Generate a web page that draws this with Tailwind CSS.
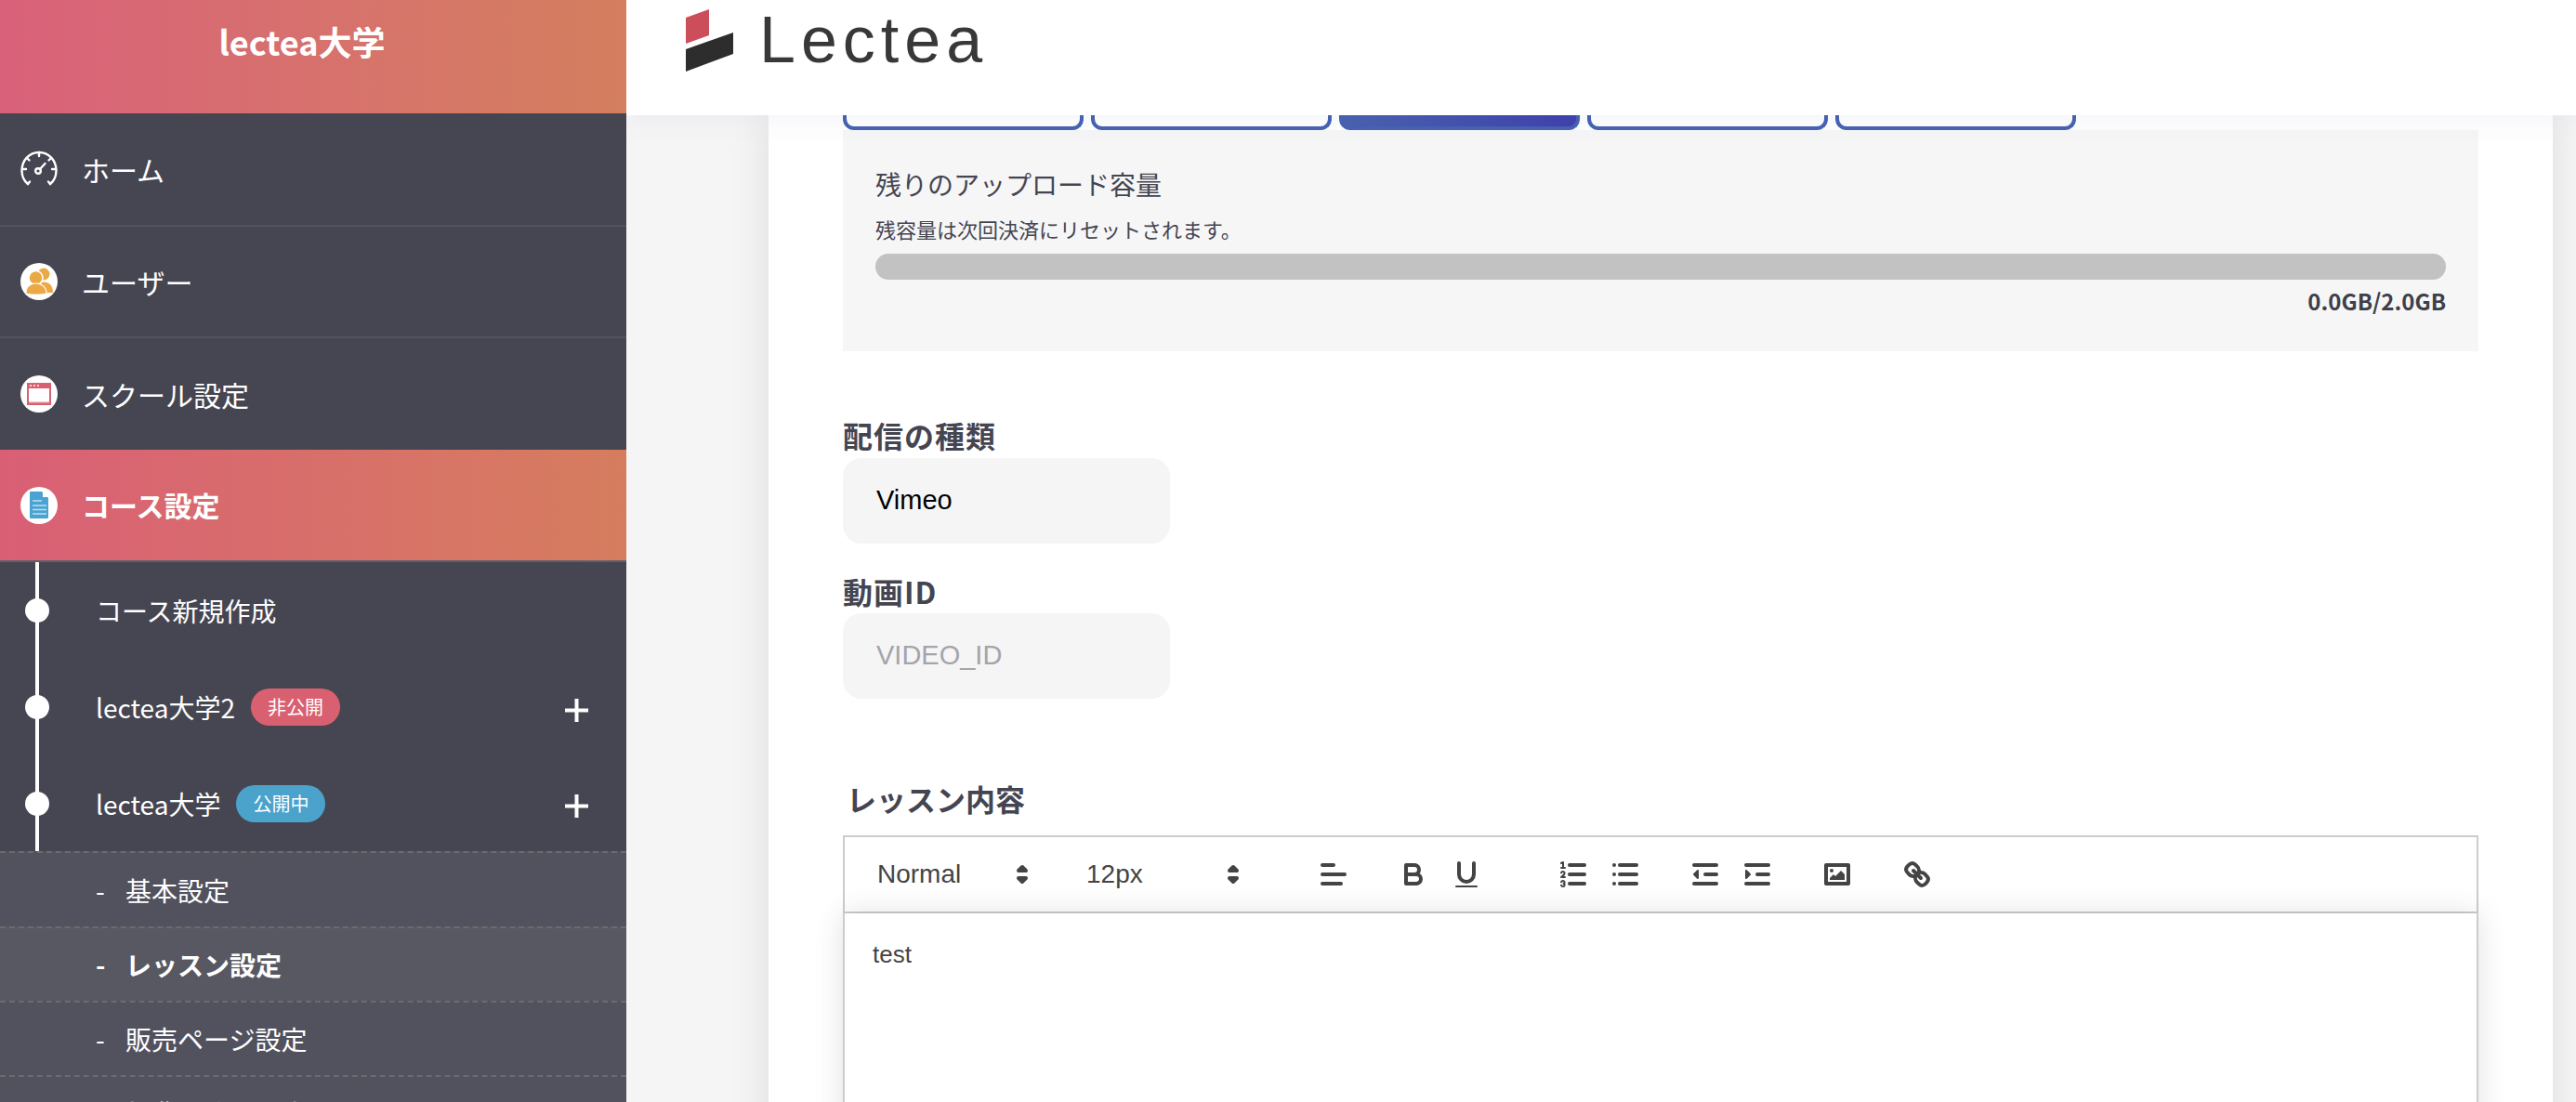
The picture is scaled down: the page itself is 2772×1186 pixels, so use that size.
<!DOCTYPE html>
<html lang="ja">
<head>
  <meta charset="UTF-8" />
  <meta name="viewport" content="width=device-width, initial-scale=1.0" />
  <title>レッスン設定 | Lectea</title>
  <script src="https://cdn.jsdelivr.net/npm/@tailwindcss/browser@4"></script>
</head>
<body class="h-screen overflow-hidden flex bg-[#f5f5f5] font-['Noto_Sans_CJK_JP','Noto_Sans',sans-serif]">

  <!-- Sidebar -->
  <aside class="w-[674px] shrink-0 h-full overflow-hidden bg-[#464652] text-white">
    <div class="h-[122px] pt-[18px] pr-[24px] text-center text-[36px] leading-[52px] font-bold bg-linear-to-r from-[#d9617a] to-[#d47f5e]">lectea大学</div>

    <nav>
      <a class="h-[122px] flex items-center pl-[22px] gap-[26px] border-b-2 border-[#53535f] text-[30px]">
        <svg class="w-10 h-10" viewBox="0 0 40 40" fill="none" stroke="white" stroke-width="2.4" stroke-linecap="round">
          <path d="M8 36C3.5 32.500 1.500 27 1.500 21.500 1.500 10.500 9.500 2 20 2s18.500 8.500 18.500 19.500C38.500 27 36.500 32.500 32 36" />
          <path d="M8 36l2-2.500M32 36l-2-2.500M20 2v4M7 8l2.500 2.500M33 8l-2.500 2.500M2 20h4M34 20h4" />
          <circle cx="19" cy="22" r="2.800" />
          <path d="M21 20l5.500-6" />
        </svg>
        ホーム
      </a>
      <a class="h-[120px] flex items-center pl-[22px] gap-[26px] border-b-2 border-[#53535f] text-[30px]">
        <span class="w-10 h-10 rounded-full bg-white flex items-center justify-center">
          <svg class="w-10 h-10" viewBox="0 0 40 40">
            <circle cx="25" cy="12" r="6.500" fill="#eba945" />
            <path d="M22 21c6-2 13 1 13 11h-10z" fill="#eba945" />
            <circle cx="16.500" cy="16" r="7.500" fill="#eba945" stroke="white" stroke-width="1.500" />
            <path d="M6 33c-.5-7 4-11 10.500-11S28 26 28 33c-7 1.500-15 1.500-22 0z" fill="#eba945" stroke="white" stroke-width="1.200" />
          </svg>
        </span>
        ユーザー
      </a>
      <a class="h-[120px] flex items-center pl-[22px] gap-[26px] text-[30px]">
        <span class="w-10 h-10 rounded-full bg-white flex items-center justify-center">
          <svg class="w-10 h-10" viewBox="0 0 40 40">
            <rect x="7" y="8" width="26" height="24" fill="#d96070" />
            <rect x="9" y="14" width="22" height="15" fill="white" />
            <rect x="9" y="28" width="22" height="1.500" fill="#f0c4ca" />
            <circle cx="11" cy="11" r="1" fill="white" />
            <circle cx="15" cy="11" r="1" fill="white" />
            <circle cx="19" cy="11" r="1" fill="white" />
          </svg>
        </span>
        スクール設定
      </a>
      <a class="h-[121px] flex items-center pl-[22px] gap-[26px] border-b-2 border-[#5f5f6b] text-[30px] font-bold bg-linear-to-r from-[#d95f75] to-[#d67d5e]">
        <span class="w-10 h-10 rounded-full bg-white flex items-center justify-center">
          <svg class="w-10 h-10" viewBox="0 0 40 40">
            <path d="M11 5h12l7 7v21a1 1 0 0 1-1 1H11a1 1 0 0 1-1-1V6a1 1 0 0 1 1-1z" fill="#4ba3d3" />
            <path d="M24 5l6 6h-6z" fill="white" />
            <path d="M13 15h10M13 20h15M13 24.500h15M13 29h15" stroke="#bfe0f0" stroke-width="1.600" />
          </svg>
        </span>
        コース設定
      </a>

      <!-- Course tree -->
      <div class="relative h-[311px] text-[28px]">
        <span class="absolute left-[38px] top-0 bottom-0 w-1 bg-white"></span>
        <div class="h-[104px] flex items-center">
          <span class="relative w-[26px] h-[26px] ml-[27px] mr-[50px] rounded-full bg-white"></span>
          コース新規作成
        </div>
        <div class="h-[104px] flex items-center">
          <span class="relative w-[26px] h-[26px] ml-[27px] mr-[50px] rounded-full bg-white"></span>
          lectea大学2
          <span class="ml-[17px] w-[96px] h-10 rounded-full bg-[#d96070] text-[20px] flex items-center justify-center">非公開</span>
          <svg class="ml-auto mr-[41px] mt-[6px] w-[25px] h-[25px]" viewBox="0 0 25 25" fill="white"><path d="M10.500 0h4v25h-4z" /><path d="M0 10.500h25v4H0z" /></svg>
        </div>
        <div class="h-[103px] flex items-center">
          <span class="relative w-[26px] h-[26px] ml-[27px] mr-[50px] rounded-full bg-white"></span>
          lectea大学
          <span class="ml-[17px] w-[96px] h-10 rounded-full bg-[#4ba3cc] text-[20px] flex items-center justify-center">公開中</span>
          <svg class="ml-auto mr-[41px] mt-[6px] w-[25px] h-[25px]" viewBox="0 0 25 25" fill="white"><path d="M10.500 0h4v25h-4z" /><path d="M0 10.500h25v4H0z" /></svg>
        </div>
      </div>

      <!-- Course sub menu -->
      <div class="bg-[#52525f] text-[28px]">
        <a class="h-[81px] flex items-center pl-[103px] border-t-2 border-dashed border-[#6a6b6b]"><span class="w-[32px]">-</span>基本設定</a>
        <a class="h-[80px] flex items-center pl-[103px] border-t-2 border-dashed border-[#6a6b6b] bg-[#585862] font-bold"><span class="w-[32px]">-</span>レッスン設定</a>
        <a class="h-[80px] flex items-center pl-[103px] border-t-2 border-dashed border-[#6a6b6b]"><span class="w-[32px]">-</span>販売ページ設定</a>
        <a class="h-[80px] flex items-center pl-[103px] border-t-2 border-dashed border-[#6a6b6b]"><span class="w-[32px]">-</span>特典・修了設定</a>
      </div>
    </nav>
  </aside>

  <!-- Main -->
  <div class="flex-1 min-w-0 flex flex-col h-full overflow-hidden">
    <header class="relative z-10 h-[124px] shrink-0 bg-white flex items-start pl-[64px] shadow-[0_4px_30px_rgba(70,90,170,0.07)]">
      <svg class="mt-[10px] w-[51px] h-[67px]" viewBox="0 0 51 67">
        <path d="M0 9L25 0v28L0 37z" fill="#cd4e5b" />
        <path d="M0 43l51-18v23L0 67z" fill="#2d2d2d" />
      </svg>
      <span class="ml-[28px] mt-[1px] text-[70px] leading-[84px] tracking-[6px] text-[#383838] font-['Liberation_Sans',sans-serif]">Lectea</span>
    </header>

    <div class="pl-[153px] pr-[25px]">
      <main class="h-[1300px] bg-white px-[80px] shadow-[0_0_40px_rgba(0,0,0,0.1)] text-[#454552]">

        <!-- Tabs, scrolled under the header -->
        <div class="flex gap-2 h-4">
          <div class="w-[259px] rounded-b-[12px] border-x-4 border-b-4 border-[#4662b0]"></div>
          <div class="w-[259px] rounded-b-[12px] border-x-4 border-b-4 border-[#4662b0]"></div>
          <div class="w-[259px] rounded-b-[12px] border-x-4 border-b-4 border-[#4662b0] bg-linear-to-r from-[#4a62ae] to-[#4040ac]"></div>
          <div class="w-[259px] rounded-b-[12px] border-x-4 border-b-4 border-[#4662b0]"></div>
          <div class="w-[259px] rounded-b-[12px] border-x-4 border-b-4 border-[#4662b0]"></div>
        </div>

        <!-- Upload quota -->
        <section class="h-[238px] bg-[#f6f6f6] px-[35px] pt-[38px]">
          <p class="text-[28px] leading-[40px]">残りのアップロード容量</p>
          <p class="mt-3 text-[22px] leading-[32px]">残容量は次回決済にリセットされます。</p>
          <div class="mt-[11px] h-7 rounded-full bg-[#c2c2c2]"></div>
          <p class="mt-[7px] text-right text-[24px] leading-[32px] font-bold text-[#3f3f4c]">0.0GB/2.0GB</p>
        </section>

        <!-- Video -->
        <label class="block mt-[68px] text-[32px] leading-[44px] font-bold tracking-[1px]">配信の種類</label>
        <div class="mt-[3px] w-[352px] h-[92px] rounded-[20px] bg-[#f5f5f5] pl-9 flex items-center text-[29px] text-black font-['Liberation_Sans',sans-serif]">Vimeo</div>
        <label class="block mt-[29px] text-[32px] leading-[44px] font-bold tracking-[1px]">動画ID</label>
        <div class="mt-[2px] w-[352px] h-[92px] rounded-[20px] bg-[#f5f5f5] pl-9 flex items-center text-[29px] text-[#a4a4ab] font-['Liberation_Sans',sans-serif]">VIDEO_ID</div>

        <!-- Lesson body -->
        <label class="block mt-[85px] pl-1 text-[32px] leading-[44px] font-bold">レッスン内容</label>
        <div class="mt-[18px] font-['Liberation_Sans',sans-serif] text-[#444]">
          <div class="h-[84px] border-2 border-[#ccc] flex items-center pl-[35px] text-[28px]">
            <span class="w-[174px] flex items-center justify-between">Normal
              <svg class="w-9 h-9" viewBox="0 0 18 18" fill="none" stroke="#444" stroke-width="2" stroke-linejoin="round"><polygon points="7 11 9 13 11 11 7 11" /><polygon points="7 7 9 5 11 7 7 7" /></svg>
            </span>
            <span class="ml-[51px] w-[176px] flex items-center justify-between">12px
              <svg class="w-9 h-9" viewBox="0 0 18 18" fill="none" stroke="#444" stroke-width="2" stroke-linejoin="round"><polygon points="7 11 9 13 11 11 7 11" /><polygon points="7 7 9 5 11 7 7 7" /></svg>
            </span>
            <!-- align -->
            <svg class="ml-[72px] w-9 h-9" viewBox="0 0 18 18" fill="none" stroke="#444" stroke-width="2" stroke-linecap="round"><path d="M3 9h12M3 14h10M3 4h6" /></svg>
            <!-- bold -->
            <svg class="ml-[50px] w-9 h-9" viewBox="0 0 18 18" fill="none" stroke="#444" stroke-width="2" stroke-linejoin="round"><path d="M5,4H9.500A2.500,2.500,0,0,1,12,6.500v0A2.500,2.500,0,0,1,9.500,9H5V4Z" /><path d="M5,9h5.500A2.500,2.500,0,0,1,13,11.500v0A2.500,2.500,0,0,1,10.500,14H5V9Z" /></svg>
            <!-- underline -->
            <svg class="ml-[21px] w-9 h-9" viewBox="0 0 18 18" fill="none" stroke="#444" stroke-width="2" stroke-linecap="round"><path d="M5,3V9a4,4,0,0,0,4,4H9a4,4,0,0,0,4-4V3" /><rect x="3" y="15" width="12" height="1" rx="0.500" fill="#444" stroke="none" /></svg>
            <!-- ordered list -->
            <svg class="ml-[79px] w-9 h-9" viewBox="0 0 18 18" fill="none" stroke="#444" stroke-width="2" stroke-linecap="round" stroke-linejoin="round">
              <path d="M7 4h8M7 9h8M7 14h8" />
              <path d="M2.500 5.500h2M3.500 5.500v-3l-1 .5" stroke-width="1" />
              <path d="M4.500 10.500h-2c0-.234 1.850-1.076 1.850-2.234A.959.959 0 0 0 2.500 8.156" stroke-width="1" />
              <path d="M2.500 14.846a.959.959 0 0 0 1.850-.109A.7.7 0 0 0 3.750 14a.688.688 0 0 0 .6-.736.959.959 0 0 0-1.850-.109" stroke-width="1" />
            </svg>
            <!-- bullet list -->
            <svg class="ml-[20px] w-9 h-9" viewBox="0 0 18 18" fill="none" stroke="#444" stroke-width="2" stroke-linecap="round"><path d="M6 4h9M6 9h9M6 14h9M3 4h0M3 9h0M3 14h0" /></svg>
            <!-- outdent -->
            <svg class="ml-[50px] w-9 h-9" viewBox="0 0 18 18" fill="none" stroke="#444" stroke-width="2" stroke-linecap="round" stroke-linejoin="round"><path d="M3 14h12M3 4h12M9 9h6" /><polygon points="5 7 5 11 3 9 5 7" fill="#444" stroke-width="1" /></svg>
            <!-- indent -->
            <svg class="ml-[20px] w-9 h-9" viewBox="0 0 18 18" fill="none" stroke="#444" stroke-width="2" stroke-linecap="round" stroke-linejoin="round"><path d="M3 14h12M3 4h12M9 9h6" /><polygon points="3 7 3 11 5 9 3 7" fill="#444" stroke-width="1" /></svg>
            <!-- image -->
            <svg class="ml-[50px] w-9 h-9" viewBox="0 0 18 18" fill="none" stroke="#444" stroke-width="2" stroke-linejoin="round"><rect x="3" y="4" width="12" height="10" /><circle cx="6" cy="7" r="1" fill="#444" stroke="none" /><polygon points="5 12 5 11 7 9 8 10 11 7 13 9 13 12 5 12" fill="#444" stroke="none" /></svg>
            <!-- link -->
            <svg class="ml-[50px] w-9 h-9" viewBox="0 0 18 18" fill="none" stroke="#444" stroke-width="2" stroke-linecap="round"><path d="M7 7l4 4" /><path d="M8.900,4.577a3.476,3.476,0,0,1,.36,4.679A3.476,3.476,0,0,1,4.577,8.900C3.185,7.500,2.035,6.400,4.217,4.217S7.500,3.185,8.900,4.577Z" /><path d="M13.423,9.100a3.476,3.476,0,0,0-4.679-.36,3.476,3.476,0,0,0,.36,4.679c1.392,1.392,2.500,2.542,4.679.36S14.815,10.500,13.423,9.100Z" /></svg>
          </div>
          <div class="h-[400px] border-x-2 border-[#ccc] pl-[30px] pt-[26px] text-[26px] leading-[36px] shadow-[0_0_30px_rgba(0,0,0,0.12)]">test</div>
        </div>
      </main>
    </div>
  </div>

</body>
</html>
